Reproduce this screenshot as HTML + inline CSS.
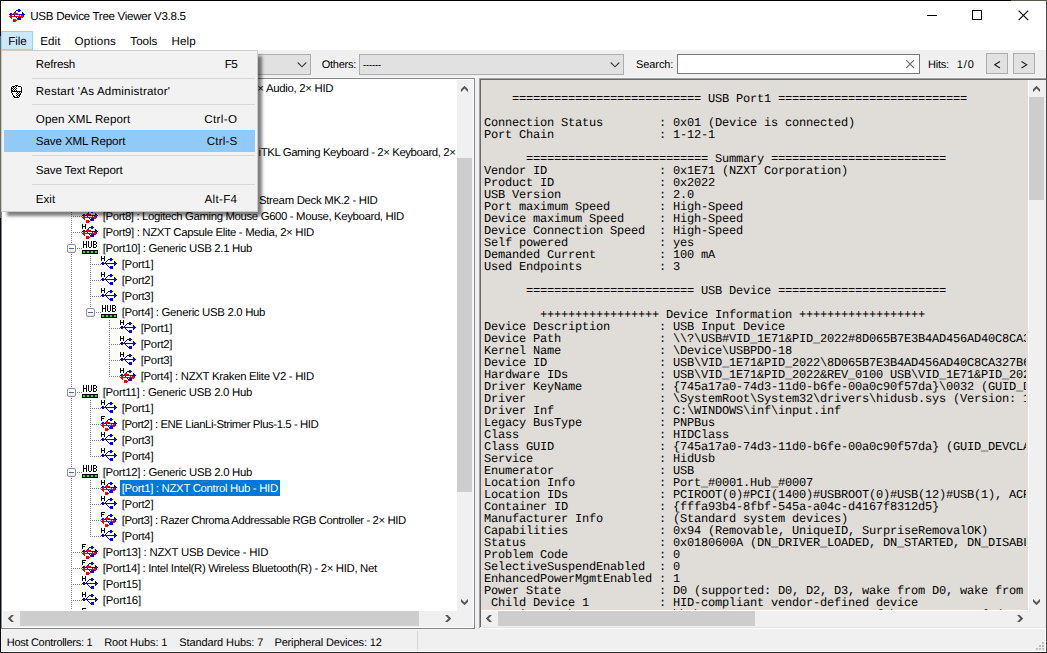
<!DOCTYPE html><html><head><meta charset="utf-8"><title>USB Device Tree Viewer</title><style>
html,body{margin:0;padding:0;background:#fff;}
body{width:1047px;height:653px;overflow:hidden;position:relative;font-family:"Liberation Sans", sans-serif;}
#win{position:absolute;left:0;top:0;width:1047px;height:653px;overflow:hidden}
.t{position:absolute;white-space:pre;font-family:"Liberation Sans", sans-serif;text-rendering:geometricPrecision}
.ic{position:absolute}
.combo{position:absolute;top:54px;height:21px;box-sizing:border-box;border:1px solid #adadad;background:#e1e1e1}
.vd{position:absolute;width:1px;background:linear-gradient(#808080 50%,transparent 50%) 0 0/1px 2px}
.hd{position:absolute;height:1px;background:linear-gradient(90deg,#808080 50%,transparent 50%) 0 0/2px 1px}
.pm{position:absolute;width:9px;height:9px;box-sizing:border-box;border:1px solid #919191;border-radius:2px;background:linear-gradient(#fff 40%,#e6e6e6)}
.pm i{position:absolute;left:1px;top:3px;width:5px;height:1px;background:#4b63a7}
#tree{position:absolute;left:0;top:0;width:1047px;height:653px;clip-path:inset(80px 590px 43px 2px)}
#rt{position:absolute;left:481px;top:80px;width:547px;height:530px;overflow:hidden;background:#e0ddd8}
#rtc{position:absolute;left:0;top:0;width:545px;height:530px;overflow:hidden}
#rt pre{margin:0;position:absolute;left:3px;top:1px;font-family:"Liberation Mono", monospace;font-size:12px;letter-spacing:-0.2012px;line-height:12px;color:#000;text-rendering:geometricPrecision}
#pop{position:absolute;left:1px;top:50px;width:257px;height:162px;box-sizing:border-box;border:1px solid #ccc;background:#f2f2f2;box-shadow:5px 5px 3px -1px rgba(0,0,0,.5);z-index:5}
</style></head><body><svg width="0" height="0" style="position:absolute"><defs><symbol id="iE" viewBox="0 0 16 16"><path d="M1 6h2v1h-2zM0 7h16v1h-16zM1 8h2v1h-2zM13 5h1v1h-1zM13 6h2v1h-2zM13 8h2v1h-2zM13 9h1v1h-1zM4 6h1v1h-1zM5 5h1v1h-1zM6 4h1v1h-1zM7 3h2v1h-2zM9 2h2v1h-2zM8 3h4v1h-4zM9 4h2v1h-2z" fill="#00f"/><path d="M5 8h1v1h-1zM6 9h1v1h-1zM7 10h1v1h-1zM8 11h1v1h-1zM9 10h3v1h-3zM9 11h3v1h-3zM9 12h3v1h-3z" fill="#00f"/></symbol><symbol id="iD" viewBox="0 0 16 16"><path d="M1 6h2v1h-2zM0 7h16v1h-16zM1 8h2v1h-2zM13 5h1v1h-1zM13 6h2v1h-2zM13 8h2v1h-2zM13 9h1v1h-1zM4 6h1v1h-1zM5 5h1v1h-1zM6 4h1v1h-1zM7 3h2v1h-2zM9 2h2v1h-2zM8 3h4v1h-4zM9 4h2v1h-2z" fill="#00f"/><path d="M0 9h15v1h-15zM2 7h1v1h-1zM1 8h2v1h-2zM1 10h2v1h-2zM2 11h1v1h-1zM12 8h2v1h-2zM12 10h2v1h-2zM5 5h2v1h-2zM4 6h5v1h-5zM5 7h2v1h-2zM9 7h1v1h-1zM10 8h1v1h-1zM10 10h1v1h-1zM9 11h1v1h-1zM8 12h1v1h-1zM4 12h3v1h-3zM4 13h4v1h-4zM4 14h3v1h-3z" fill="#f00"/><path d="M5 8h1v1h-1zM6 9h1v1h-1zM7 10h1v1h-1zM8 11h1v1h-1zM9 10h3v1h-3zM9 11h3v1h-3zM9 12h3v1h-3z" fill="#00f"/></symbol><symbol id="gH" viewBox="0 0 16 16"><path d="M0 0h1v1h-1zM3 0h1v1h-1zM0 1h1v1h-1zM3 1h1v1h-1zM0 2h4v1h-4zM0 3h1v1h-1zM3 3h1v1h-1zM0 4h1v1h-1zM3 4h1v1h-1z" fill="#000"/></symbol><symbol id="gF" viewBox="0 0 16 16"><path d="M0 0h4v1h-4zM0 1h1v1h-1zM0 2h3v1h-3zM0 3h1v1h-1zM0 4h1v1h-1z" fill="#000"/></symbol><symbol id="iHub" viewBox="0 0 16 16"><path d="M1 1h1v1h-1zM4 1h1v1h-1zM1 2h1v1h-1zM4 2h1v1h-1zM1 3h1v1h-1zM4 3h1v1h-1zM1 4h4v1h-4zM1 5h1v1h-1zM4 5h1v1h-1zM1 6h1v1h-1zM4 6h1v1h-1zM1 7h1v1h-1zM4 7h1v1h-1zM6 1h1v1h-1zM9 1h1v1h-1zM6 2h1v1h-1zM9 2h1v1h-1zM6 3h1v1h-1zM9 3h1v1h-1zM6 4h1v1h-1zM9 4h1v1h-1zM6 5h1v1h-1zM9 5h1v1h-1zM6 6h1v1h-1zM9 6h1v1h-1zM7 7h2v1h-2zM11 1h3v1h-3zM11 2h1v1h-1zM14 2h1v1h-1zM11 3h1v1h-1zM14 3h1v1h-1zM11 4h3v1h-3zM11 5h1v1h-1zM14 5h1v1h-1zM11 6h1v1h-1zM14 6h1v1h-1zM11 7h3v1h-3z" fill="#000"/><path d="M0 10h16v1h-16zM0 11h16v1h-16zM0 12h16v1h-16zM0 13h16v1h-16z" fill="#000"/><path d="M1 11h2v1h-2zM5 11h2v1h-2zM9 11h2v1h-2zM13 11h2v1h-2zM1 12h2v1h-2zM5 12h2v1h-2zM9 12h2v1h-2zM13 12h2v1h-2z" fill="#0f0"/></symbol></defs></svg><div id="win"><div style="position:absolute;left:0;top:0;width:1047px;height:50px;background:#fff"></div><svg class="ic" style="left:9px;top:7px" width="16" height="16" shape-rendering="crispEdges"><use href="#iD"/></svg><div class="t" style="left:30.268px;top:8px;height:17px;line-height:17px;font-size:11.6px;letter-spacing:-0.299px;color:#000;">USB Device Tree Viewer V3.8.5</div><svg style="position:absolute;left:920px;top:5px" width="115" height="22" shape-rendering="crispEdges"><path d="M7 10.5h10" stroke="#000" stroke-width="1" fill="none"/><rect x="52.5" y="5.5" width="9" height="9" stroke="#000" stroke-width="1" fill="none"/><path d="M98.6 5.6l9.6 9.6M108.2 5.6l-9.6 9.6" stroke="#000" stroke-width="1.1" fill="none" shape-rendering="geometricPrecision"/></svg><div style="position:absolute;left:1px;top:31px;width:32px;height:19px;background:#cce8ff;box-shadow:inset 0 0 0 1px #99d1ff"></div><div class="t" style="left:8.168000000000001px;top:32px;height:19px;line-height:19px;font-size:11.6px;letter-spacing:-0.065px;color:#000;">File</div><div class="t" style="left:40.168px;top:32px;height:19px;line-height:19px;font-size:11.6px;letter-spacing:0.111px;color:#000;">Edit</div><div class="t" style="left:74.468px;top:32px;height:19px;line-height:19px;font-size:11.6px;letter-spacing:0.251px;color:#000;">Options</div><div class="t" style="left:130.368px;top:32px;height:19px;line-height:19px;font-size:11.6px;letter-spacing:-0.030px;color:#000;">Tools</div><div class="t" style="left:171.468px;top:32px;height:19px;line-height:19px;font-size:11.6px;letter-spacing:0.167px;color:#000;">Help</div><div style="position:absolute;left:0;top:50px;width:1047px;height:603px;background:#f0f0f0"></div><div style="position:absolute;left:0;top:77px;width:1047px;height:1px;background:#f5f5f5"></div><div class="combo" style="left:200px;width:111px"></div><svg style="position:absolute;left:297px;top:61px" width="10" height="7"><path d="M0.7 1.5l4.3 4.3l4.3-4.3" stroke="#3c3c3c" stroke-width="1.15" fill="none"/></svg><div class="combo" style="left:359px;width:265px"></div><svg style="position:absolute;left:610px;top:61px" width="10" height="7"><path d="M0.7 1.5l4.3 4.3l4.3-4.3" stroke="#3c3c3c" stroke-width="1.15" fill="none"/></svg><div class="t" style="left:321.67999999999995px;top:57px;height:16px;line-height:16px;font-size:11px;letter-spacing:-0.228px;color:#000;">Others:</div><div style="position:absolute;left:363px;top:65px;width:18px;height:1px;background:repeating-linear-gradient(90deg,#a5651c 0 1px,#000 1px 2px,#1b62b0 2px 3px)"></div><div class="t" style="left:636.0799999999999px;top:57px;height:16px;line-height:16px;font-size:11px;letter-spacing:-0.106px;color:#000;">Search:</div><div style="position:absolute;left:677px;top:54px;width:243px;height:20px;box-sizing:border-box;border:1px solid #7a7a7a;background:#fff"></div><svg style="position:absolute;left:905px;top:59px" width="10" height="10"><path d="M1.2 1.2l7.8 7.8M9 1.2l-7.8 7.8" stroke="#6e6e6e" stroke-width="1.1" fill="none"/></svg><div class="t" style="left:928.0799999999999px;top:57px;height:16px;line-height:16px;font-size:11px;letter-spacing:-0.284px;color:#000;">Hits:</div><div class="t" style="left:956.78px;top:57px;height:16px;line-height:16px;font-size:11px;letter-spacing:0.861px;color:#000;">1/0</div><div style="position:absolute;left:986px;top:53px;width:22px;height:21px;box-sizing:border-box;border:1px solid #adadad;background:#e1e1e1"></div><svg style="position:absolute;left:994px;top:61px" width="7" height="8"><path d="M6 0.5L0.7 3.75L6 7" stroke="#1c1c1c" stroke-width="1.05" fill="none"/></svg><div style="position:absolute;left:1013px;top:53px;width:22px;height:21px;box-sizing:border-box;border:1px solid #adadad;background:#e1e1e1"></div><svg style="position:absolute;left:1021px;top:61px" width="7" height="8"><path d="M0.5 0.5L5.8 3.75L0.5 7" stroke="#1c1c1c" stroke-width="1.05" fill="none"/></svg><div style="position:absolute;left:1px;top:78px;width:474px;height:551px;box-sizing:border-box;border:1px solid #828790;background:#fff"></div><div id="tree"><div class="vd" style="left:71px;top:80px;height:561px"></div><div class="vd" style="left:90px;top:256px;height:57px"></div><div class="vd" style="left:109px;top:320px;height:57px"></div><div class="vd" style="left:90px;top:400px;height:57px"></div><div class="vd" style="left:90px;top:480px;height:57px"></div><div class="hd" style="left:71px;top:216px;width:11px"></div><svg class="ic" style="left:82px;top:208px" width="16" height="16" shape-rendering="crispEdges"><use href="#iD"/></svg><div class="t" style="left:102.67200000000001px;top:208.6px;height:16px;line-height:16px;font-size:11.4px;letter-spacing:-0.366px;color:#000;">[Port8] : Logitech Gaming Mouse G600 - Mouse, Keyboard, HID</div><div class="hd" style="left:71px;top:232px;width:11px"></div><svg class="ic" style="left:82px;top:224px" width="16" height="16" shape-rendering="crispEdges"><use href="#iD"/><use href="#gH"/></svg><div class="t" style="left:102.67200000000001px;top:224.6px;height:16px;line-height:16px;font-size:11.4px;letter-spacing:-0.339px;color:#000;">[Port9] : NZXT Capsule Elite - Media, 2× HID</div><div class="hd" style="left:77px;top:248px;width:5px"></div><svg class="ic" style="left:82px;top:240px" width="16" height="16" shape-rendering="crispEdges"><use href="#iHub"/></svg><div class="t" style="left:102.67200000000001px;top:240.6px;height:16px;line-height:16px;font-size:11.4px;letter-spacing:-0.320px;color:#000;">[Port10] : Generic USB 2.1 Hub</div><div class="hd" style="left:90px;top:264px;width:11px"></div><svg class="ic" style="left:101px;top:256px" width="16" height="16" shape-rendering="crispEdges"><use href="#iE"/><use href="#gH"/></svg><div class="t" style="left:121.67200000000001px;top:256.6px;height:16px;line-height:16px;font-size:11.4px;letter-spacing:-0.279px;color:#000;">[Port1]</div><div class="hd" style="left:90px;top:280px;width:11px"></div><svg class="ic" style="left:101px;top:272px" width="16" height="16" shape-rendering="crispEdges"><use href="#iE"/><use href="#gH"/></svg><div class="t" style="left:121.67200000000001px;top:272.6px;height:16px;line-height:16px;font-size:11.4px;letter-spacing:-0.279px;color:#000;">[Port2]</div><div class="hd" style="left:90px;top:296px;width:11px"></div><svg class="ic" style="left:101px;top:288px" width="16" height="16" shape-rendering="crispEdges"><use href="#iE"/><use href="#gH"/></svg><div class="t" style="left:121.67200000000001px;top:288.6px;height:16px;line-height:16px;font-size:11.4px;letter-spacing:-0.279px;color:#000;">[Port3]</div><div class="hd" style="left:96px;top:312px;width:5px"></div><svg class="ic" style="left:101px;top:304px" width="16" height="16" shape-rendering="crispEdges"><use href="#iHub"/></svg><div class="t" style="left:121.67200000000001px;top:304.6px;height:16px;line-height:16px;font-size:11.4px;letter-spacing:-0.316px;color:#000;">[Port4] : Generic USB 2.0 Hub</div><div class="hd" style="left:109px;top:328px;width:11px"></div><svg class="ic" style="left:120px;top:320px" width="16" height="16" shape-rendering="crispEdges"><use href="#iE"/><use href="#gH"/></svg><div class="t" style="left:140.672px;top:320.6px;height:16px;line-height:16px;font-size:11.4px;letter-spacing:-0.293px;color:#000;">[Port1]</div><div class="hd" style="left:109px;top:344px;width:11px"></div><svg class="ic" style="left:120px;top:336px" width="16" height="16" shape-rendering="crispEdges"><use href="#iE"/><use href="#gH"/></svg><div class="t" style="left:140.672px;top:336.6px;height:16px;line-height:16px;font-size:11.4px;letter-spacing:-0.293px;color:#000;">[Port2]</div><div class="hd" style="left:109px;top:360px;width:11px"></div><svg class="ic" style="left:120px;top:352px" width="16" height="16" shape-rendering="crispEdges"><use href="#iE"/><use href="#gH"/></svg><div class="t" style="left:140.672px;top:352.6px;height:16px;line-height:16px;font-size:11.4px;letter-spacing:-0.293px;color:#000;">[Port3]</div><div class="hd" style="left:109px;top:376px;width:11px"></div><svg class="ic" style="left:120px;top:368px" width="16" height="16" shape-rendering="crispEdges"><use href="#iD"/><use href="#gH"/></svg><div class="t" style="left:140.672px;top:368.6px;height:16px;line-height:16px;font-size:11.4px;letter-spacing:-0.300px;color:#000;">[Port4] : NZXT Kraken Elite V2 - HID</div><div class="hd" style="left:77px;top:392px;width:5px"></div><svg class="ic" style="left:82px;top:384px" width="16" height="16" shape-rendering="crispEdges"><use href="#iHub"/></svg><div class="t" style="left:102.67200000000001px;top:384.6px;height:16px;line-height:16px;font-size:11.4px;letter-spacing:-0.292px;color:#000;">[Port11] : Generic USB 2.0 Hub</div><div class="hd" style="left:90px;top:408px;width:11px"></div><svg class="ic" style="left:101px;top:400px" width="16" height="16" shape-rendering="crispEdges"><use href="#iE"/><use href="#gH"/></svg><div class="t" style="left:121.67200000000001px;top:400.6px;height:16px;line-height:16px;font-size:11.4px;letter-spacing:-0.279px;color:#000;">[Port1]</div><div class="hd" style="left:90px;top:424px;width:11px"></div><svg class="ic" style="left:101px;top:416px" width="16" height="16" shape-rendering="crispEdges"><use href="#iD"/><use href="#gF"/></svg><div class="t" style="left:121.67200000000001px;top:416.6px;height:16px;line-height:16px;font-size:11.4px;letter-spacing:-0.431px;color:#000;">[Port2] : ENE LianLi-Strimer Plus-1.5 - HID</div><div class="hd" style="left:90px;top:440px;width:11px"></div><svg class="ic" style="left:101px;top:432px" width="16" height="16" shape-rendering="crispEdges"><use href="#iE"/><use href="#gH"/></svg><div class="t" style="left:121.67200000000001px;top:432.6px;height:16px;line-height:16px;font-size:11.4px;letter-spacing:-0.279px;color:#000;">[Port3]</div><div class="hd" style="left:90px;top:456px;width:11px"></div><svg class="ic" style="left:101px;top:448px" width="16" height="16" shape-rendering="crispEdges"><use href="#iE"/><use href="#gH"/></svg><div class="t" style="left:121.67200000000001px;top:448.6px;height:16px;line-height:16px;font-size:11.4px;letter-spacing:-0.279px;color:#000;">[Port4]</div><div class="hd" style="left:77px;top:472px;width:5px"></div><svg class="ic" style="left:82px;top:464px" width="16" height="16" shape-rendering="crispEdges"><use href="#iHub"/></svg><div class="t" style="left:102.67200000000001px;top:464.6px;height:16px;line-height:16px;font-size:11.4px;letter-spacing:-0.320px;color:#000;">[Port12] : Generic USB 2.0 Hub</div><div class="hd" style="left:90px;top:488px;width:11px"></div><svg class="ic" style="left:101px;top:480px" width="16" height="16" shape-rendering="crispEdges"><use href="#iD"/><use href="#gH"/></svg><div style="position:absolute;left:120px;top:480px;width:160px;height:16px;background:#0078d7"></div><div class="t" style="left:121.67200000000001px;top:480.6px;height:16px;line-height:16px;font-size:11.4px;letter-spacing:-0.317px;color:#fff;">[Port1] : NZXT Control Hub - HID</div><div class="hd" style="left:90px;top:504px;width:11px"></div><svg class="ic" style="left:101px;top:496px" width="16" height="16" shape-rendering="crispEdges"><use href="#iE"/><use href="#gH"/></svg><div class="t" style="left:121.67200000000001px;top:496.6px;height:16px;line-height:16px;font-size:11.4px;letter-spacing:-0.279px;color:#000;">[Port2]</div><div class="hd" style="left:90px;top:520px;width:11px"></div><svg class="ic" style="left:101px;top:512px" width="16" height="16" shape-rendering="crispEdges"><use href="#iD"/><use href="#gF"/></svg><div class="t" style="left:121.67200000000001px;top:512.6px;height:16px;line-height:16px;font-size:11.4px;letter-spacing:-0.435px;color:#000;">[Port3] : Razer Chroma Addressable RGB Controller - 2× HID</div><div class="hd" style="left:90px;top:536px;width:11px"></div><svg class="ic" style="left:101px;top:528px" width="16" height="16" shape-rendering="crispEdges"><use href="#iE"/><use href="#gH"/></svg><div class="t" style="left:121.67200000000001px;top:528.6px;height:16px;line-height:16px;font-size:11.4px;letter-spacing:-0.279px;color:#000;">[Port4]</div><div class="hd" style="left:71px;top:552px;width:11px"></div><svg class="ic" style="left:82px;top:544px" width="16" height="16" shape-rendering="crispEdges"><use href="#iD"/><use href="#gF"/></svg><div class="t" style="left:102.67200000000001px;top:544.6px;height:16px;line-height:16px;font-size:11.4px;letter-spacing:-0.241px;color:#000;">[Port13] : NZXT USB Device - HID</div><div class="hd" style="left:71px;top:568px;width:11px"></div><svg class="ic" style="left:82px;top:560px" width="16" height="16" shape-rendering="crispEdges"><use href="#iD"/><use href="#gF"/></svg><div class="t" style="left:102.67200000000001px;top:560.6px;height:16px;line-height:16px;font-size:11.4px;letter-spacing:-0.348px;color:#000;">[Port14] : Intel Intel(R) Wireless Bluetooth(R) - 2× HID, Net</div><div class="hd" style="left:71px;top:584px;width:11px"></div><svg class="ic" style="left:82px;top:576px" width="16" height="16" shape-rendering="crispEdges"><use href="#iE"/><use href="#gH"/></svg><div class="t" style="left:102.67200000000001px;top:576.6px;height:16px;line-height:16px;font-size:11.4px;letter-spacing:-0.210px;color:#000;">[Port15]</div><div class="hd" style="left:71px;top:600px;width:11px"></div><svg class="ic" style="left:82px;top:592px" width="16" height="16" shape-rendering="crispEdges"><use href="#iE"/><use href="#gH"/></svg><div class="t" style="left:102.67200000000001px;top:592.6px;height:16px;line-height:16px;font-size:11.4px;letter-spacing:-0.210px;color:#000;">[Port16]</div><div class="hd" style="left:71px;top:616px;width:11px"></div><svg class="ic" style="left:82px;top:608px" width="16" height="16" shape-rendering="crispEdges"><use href="#iD"/><use href="#gF"/></svg><div class="t" style="left:102.67200000000001px;top:608.6px;height:16px;line-height:16px;font-size:11.4px;letter-spacing:0.812px;color:#000;">[Port17] : Device</div><div class="pm" style="left:67px;top:244px"><i></i></div><div class="pm" style="left:86px;top:308px"><i></i></div><div class="pm" style="left:67px;top:388px"><i></i></div><div class="pm" style="left:67px;top:468px"><i></i></div><div class="t" style="left:257.372px;top:80.6px;height:16px;line-height:16px;font-size:11.4px;letter-spacing:-0.301px;color:#000;">× Audio, 2× HID</div><div class="t" style="left:258.572px;top:144.6px;height:16px;line-height:16px;font-size:11.4px;letter-spacing:-0.408px;color:#000;">iTKL Gaming Keyboard - 2× Keyboard, 2×</div><div class="t" style="left:258.972px;top:192.6px;height:16px;line-height:16px;font-size:11.4px;letter-spacing:-0.310px;color:#000;">Stream Deck MK.2 - HID</div></div><div style="position:absolute;left:457px;top:80px;width:16px;height:531px;background:#f0f0f0"></div><div style="position:absolute;left:457px;top:158px;width:15px;height:334px;background:#cdcdcd"></div><svg style="position:absolute;left:461px;top:86px" width="7" height="6"><polygon points="0,3.3 3.5,-0.2 7,3.3 7,6.1 3.5,2.6 0,6.1" fill="#565656"/></svg><svg style="position:absolute;left:461px;top:599px" width="7" height="6"><polygon points="0,2.7 3.5,6.2 7,2.7 7,-0.09999999999999964 3.5,3.4 0,-0.09999999999999964" fill="#565656"/></svg><div style="position:absolute;left:3px;top:611px;width:470px;height:16px;background:#f0f0f0"></div><div style="position:absolute;left:20px;top:611px;width:399px;height:15px;background:#cdcdcd"></div><svg style="position:absolute;left:8px;top:615px" width="6" height="7"><polygon points="3.3,0 -0.2,3.5 3.3,7 6.1,7 2.6,3.5 6.1,0" fill="#565656"/></svg><svg style="position:absolute;left:445px;top:615px" width="6" height="7"><polygon points="2.7,0 6.2,3.5 2.7,7 -0.09999999999999964,7 3.4,3.5 -0.09999999999999964,0" fill="#565656"/></svg><div style="position:absolute;left:479px;top:78px;width:567px;height:551px;background:#f0f0f0"></div><div style="position:absolute;left:479px;top:78px;width:567px;height:1px;background:#a0a0a0"></div><div style="position:absolute;left:479px;top:78px;width:1px;height:550px;background:#a0a0a0"></div><div style="position:absolute;left:480px;top:79px;width:566px;height:1px;background:#696969"></div><div style="position:absolute;left:480px;top:79px;width:1px;height:548px;background:#696969"></div><div style="position:absolute;left:480px;top:627px;width:566px;height:1px;background:#e3e3e3"></div><div style="position:absolute;left:479px;top:628px;width:567px;height:1px;background:#fff"></div><div style="position:absolute;left:481px;top:80px;width:548px;height:531px;background:#fff"></div><div id="rt"><div id="rtc"><pre>

    =========================== USB Port1 ===========================

Connection Status        : 0x01 (Device is connected)
Port Chain               : 1-12-1

      ========================== Summary =========================
Vendor ID                : 0x1E71 (NZXT Corporation)
Product ID               : 0x2022
USB Version              : 2.0
Port maximum Speed       : High-Speed
Device maximum Speed     : High-Speed
Device Connection Speed  : High-Speed
Self powered             : yes
Demanded Current         : 100 mA
Used Endpoints           : 3

      ======================== USB Device ========================

        +++++++++++++++++ Device Information ++++++++++++++++++
Device Description       : USB Input Device
Device Path              : \\?\USB#VID_1E71&amp;PID_2022#8D065B7E3B4AD456AD40C8CA327B6FD0#{a5dcbf10-6530-11d2-901f-00c04fb951ed} (GUID_DEVINTERFACE_USB_DEVICE)
Kernel Name              : \Device\USBPDO-18
Device ID                : USB\VID_1E71&amp;PID_2022\8D065B7E3B4AD456AD40C8CA327B6FD0
Hardware IDs             : USB\VID_1E71&amp;PID_2022&amp;REV_0100 USB\VID_1E71&amp;PID_2022
Driver KeyName           : {745a17a0-74d3-11d0-b6fe-00a0c90f57da}\0032 (GUID_DEVCLASS_HIDCLASS)
Driver                   : \SystemRoot\System32\drivers\hidusb.sys (Version: 10.0.26100.1150  Date: 2024-07-18)
Driver Inf               : C:\WINDOWS\inf\input.inf
Legacy BusType           : PNPBus
Class                    : HIDClass
Class GUID               : {745a17a0-74d3-11d0-b6fe-00a0c90f57da} (GUID_DEVCLASS_HIDCLASS)
Service                  : HidUsb
Enumerator               : USB
Location Info            : Port_#0001.Hub_#0007
Location IDs             : PCIROOT(0)#PCI(1400)#USBROOT(0)#USB(12)#USB(1), ACPI(_SB_)#ACPI(PC00)#ACPI(XHCI)#ACPI(RHUB)#ACPI(HS12)#USB(1)
Container ID             : {fffa93b4-8fbf-545a-a04c-d4167f8312d5}
Manufacturer Info        : (Standard system devices)
Capabilities             : 0x94 (Removable, UniqueID, SurpriseRemovalOK)
Status                   : 0x0180600A (DN_DRIVER_LOADED, DN_STARTED, DN_DISABLEABLE, DN_REMOVABLE, DN_NT_ENUMERATOR, DN_NT_DRIVER)
Problem Code             : 0
SelectiveSuspendEnabled  : 0
EnhancedPowerMgmtEnabled : 1
Power State              : D0 (supported: D0, D2, D3, wake from D0, wake from D2)
 Child Device 1          : HID-compliant vendor-defined device
  Device Path            : \\?\HID#VID_1E71&amp;PID_2022#9&amp;2f4b1c6a&amp;0&amp;0000#{4d1e55b2-f16f-11cf-88cb-001111000030}</pre></div></div><div style="position:absolute;left:1029px;top:97px;width:15px;height:103px;background:#cdcdcd"></div><svg style="position:absolute;left:1033px;top:86px" width="7" height="6"><polygon points="0,3.3 3.5,-0.2 7,3.3 7,6.1 3.5,2.6 0,6.1" fill="#565656"/></svg><svg style="position:absolute;left:1033px;top:599px" width="7" height="6"><polygon points="0,2.7 3.5,6.2 7,2.7 7,-0.09999999999999964 3.5,3.4 0,-0.09999999999999964" fill="#565656"/></svg><div style="position:absolute;left:498px;top:611px;width:257px;height:15px;background:#cdcdcd"></div><svg style="position:absolute;left:486px;top:615px" width="6" height="7"><polygon points="3.3,0 -0.2,3.5 3.3,7 6.1,7 2.6,3.5 6.1,0" fill="#565656"/></svg><svg style="position:absolute;left:1017px;top:615px" width="6" height="7"><polygon points="2.7,0 6.2,3.5 2.7,7 -0.09999999999999964,7 3.4,3.5 -0.09999999999999964,0" fill="#565656"/></svg><div style="position:absolute;left:0;top:629px;width:1047px;height:24px;background:#f0f0f0"></div><div style="position:absolute;left:417px;top:631px;width:1px;height:20px;background:#d7d7d7"></div><div class="t" style="left:6.78px;top:635px;height:16px;line-height:16px;font-size:11px;letter-spacing:-0.295px;color:#000;">Host Controllers: 1</div><div class="t" style="left:104.18px;top:635px;height:16px;line-height:16px;font-size:11px;letter-spacing:-0.085px;color:#000;">Root Hubs: 1</div><div class="t" style="left:179.28px;top:635px;height:16px;line-height:16px;font-size:11px;letter-spacing:-0.103px;color:#000;">Standard Hubs: 7</div><div class="t" style="left:274.47999999999996px;top:635px;height:16px;line-height:16px;font-size:11px;letter-spacing:-0.159px;color:#000;">Peripheral Devices: 12</div><svg style="position:absolute;left:1036px;top:642px" width="8" height="8" shape-rendering="crispEdges" fill="#bfbfbf"><rect x="6" y="0" width="2" height="2"/><rect x="3" y="3" width="2" height="2"/><rect x="6" y="3" width="2" height="2"/><rect x="0" y="6" width="2" height="2"/><rect x="3" y="6" width="2" height="2"/><rect x="6" y="6" width="2" height="2"/></svg><div id="pop"><div style="position:absolute;left:2px;top:79px;width:251px;height:22px;background:#91c9f7"></div><div style="position:absolute;left:30px;top:27px;width:223px;height:1px;background:#d7d7d7"></div><div style="position:absolute;left:30px;top:53px;width:223px;height:1px;background:#d7d7d7"></div><div style="position:absolute;left:30px;top:104px;width:223px;height:1px;background:#d7d7d7"></div><div style="position:absolute;left:30px;top:133px;width:223px;height:1px;background:#d7d7d7"></div></div><div class="t" style="left:35.768px;top:54.5px;height:19px;line-height:19px;font-size:11.6px;letter-spacing:-0.183px;color:#000;z-index:6;">Refresh</div><div class="t" style="left:224.668px;top:54.5px;height:19px;line-height:19px;font-size:11.6px;letter-spacing:-0.402px;color:#000;z-index:6;">F5</div><div class="t" style="left:35.768px;top:82px;height:19px;line-height:19px;font-size:11.6px;letter-spacing:0.189px;color:#000;z-index:6;">Restart 'As Administrator'</div><div class="t" style="left:35.768px;top:109.5px;height:19px;line-height:19px;font-size:11.6px;letter-spacing:0.101px;color:#000;z-index:6;">Open XML Report</div><div class="t" style="left:204.168px;top:109.5px;height:19px;line-height:19px;font-size:11.6px;letter-spacing:0.384px;color:#000;z-index:6;">Ctrl-O</div><div class="t" style="left:35.768px;top:132px;height:19px;line-height:19px;font-size:11.6px;letter-spacing:-0.103px;color:#000;z-index:6;">Save XML Report</div><div class="t" style="left:206.768px;top:132px;height:19px;line-height:19px;font-size:11.6px;letter-spacing:0.167px;color:#000;z-index:6;">Ctrl-S</div><div class="t" style="left:35.768px;top:161px;height:19px;line-height:19px;font-size:11.6px;letter-spacing:-0.118px;color:#000;z-index:6;">Save Text Report</div><div class="t" style="left:35.768px;top:190px;height:19px;line-height:19px;font-size:11.6px;letter-spacing:0.025px;color:#000;z-index:6;">Exit</div><div class="t" style="left:204.468px;top:190px;height:19px;line-height:19px;font-size:11.6px;letter-spacing:0.334px;color:#000;z-index:6;">Alt-F4</div><svg style="position:absolute;left:10px;top:84px;z-index:6" width="13" height="15" shape-rendering="crispEdges"><path d="M6 0h1v1h-1zM9 1h1v1h-1zM6 14h1v1h-1zM4 14h1v1h-1zM12 3h1v1h-1zM12 6h1v1h-1zM9 13h1v1h-1zM11 10h1v1h-1zM10 12h1v1h-1zM1 9h1v1h-1zM2 1h1v1h-1zM0 5h1v1h-1zM0 8h1v1h-1zM8 14h1v1h-1zM4 1h1v1h-1zM12 5h1v1h-1zM1 2h1v1h-1zM10 11h1v1h-1zM12 8h1v1h-1zM11 9h1v1h-1zM2 12h1v1h-1zM8 1h1v1h-1zM7 0h1v1h-1zM7 14h1v1h-1zM0 4h1v1h-1zM5 0h1v1h-1zM0 7h1v1h-1zM10 1h1v1h-1zM5 14h1v1h-1zM12 4h1v1h-1zM11 2h1v1h-1zM1 10h1v1h-1zM3 1h1v1h-1zM12 7h1v1h-1zM3 13h1v1h-1zM2 11h1v1h-1zM0 3h1v1h-1zM0 6h1v1h-1z" fill="#fbfbfb"/><path d="M5 2h1v1h-1zM7 2h1v1h-1zM2 3h1v1h-1zM4 3h1v1h-1zM6 3h1v1h-1zM7 3h1v1h-1zM8 3h1v1h-1zM9 3h1v1h-1zM10 3h1v1h-1zM3 4h1v1h-1zM5 4h1v1h-1zM7 4h1v1h-1zM8 4h1v1h-1zM9 4h1v1h-1zM10 4h1v1h-1zM2 5h1v1h-1zM4 5h1v1h-1zM6 5h1v1h-1zM7 5h1v1h-1zM8 5h1v1h-1zM9 5h1v1h-1zM10 5h1v1h-1zM3 6h1v1h-1zM5 6h1v1h-1zM7 6h1v1h-1zM8 6h1v1h-1zM9 6h1v1h-1zM10 6h1v1h-1zM2 8h1v1h-1zM3 8h1v1h-1zM4 8h1v1h-1zM5 8h1v1h-1zM6 8h1v1h-1zM8 8h1v1h-1zM10 8h1v1h-1zM3 9h1v1h-1zM4 9h1v1h-1zM5 9h1v1h-1zM7 9h1v1h-1zM9 9h1v1h-1zM3 10h1v1h-1zM4 10h1v1h-1zM5 10h1v1h-1zM6 10h1v1h-1zM8 10h1v1h-1zM4 11h1v1h-1zM5 11h1v1h-1zM7 11h1v1h-1zM5 12h1v1h-1zM6 12h1v1h-1zM8 12h1v1h-1z" fill="#fff"/><path d="M5 1h1v1h-1zM6 1h1v1h-1zM7 1h1v1h-1zM2 2h1v1h-1zM3 2h1v1h-1zM4 2h1v1h-1zM6 2h1v1h-1zM8 2h1v1h-1zM9 2h1v1h-1zM10 2h1v1h-1zM1 3h1v1h-1zM3 3h1v1h-1zM5 3h1v1h-1zM11 3h1v1h-1zM1 4h1v1h-1zM2 4h1v1h-1zM4 4h1v1h-1zM6 4h1v1h-1zM11 4h1v1h-1zM1 5h1v1h-1zM3 5h1v1h-1zM5 5h1v1h-1zM11 5h1v1h-1zM1 6h1v1h-1zM2 6h1v1h-1zM4 6h1v1h-1zM6 6h1v1h-1zM11 6h1v1h-1zM1 7h1v1h-1zM2 7h1v1h-1zM3 7h1v1h-1zM4 7h1v1h-1zM5 7h1v1h-1zM6 7h1v1h-1zM7 7h1v1h-1zM8 7h1v1h-1zM9 7h1v1h-1zM10 7h1v1h-1zM11 7h1v1h-1zM1 8h1v1h-1zM7 8h1v1h-1zM9 8h1v1h-1zM11 8h1v1h-1zM2 9h1v1h-1zM6 9h1v1h-1zM8 9h1v1h-1zM10 9h1v1h-1zM2 10h1v1h-1zM7 10h1v1h-1zM9 10h1v1h-1zM10 10h1v1h-1zM3 11h1v1h-1zM6 11h1v1h-1zM8 11h1v1h-1zM9 11h1v1h-1zM3 12h1v1h-1zM4 12h1v1h-1zM7 12h1v1h-1zM9 12h1v1h-1zM4 13h1v1h-1zM5 13h1v1h-1zM6 13h1v1h-1zM7 13h1v1h-1zM8 13h1v1h-1z" fill="#000"/></svg><div style="position:absolute;left:0;top:0;width:1047px;height:1px;background:#000;z-index:9"></div><div style="position:absolute;left:1011px;top:0;width:36px;height:1px;background:#55554a;z-index:9"></div><div style="position:absolute;left:0;top:0;width:1px;height:653px;background:#0a0a0a;z-index:9"></div><div style="position:absolute;left:0;top:36px;width:1px;height:182px;background:#6a6a60;z-index:9"></div><div style="position:absolute;left:1046px;top:1px;width:1px;height:652px;background:#4a4a4a;z-index:9"></div><div style="position:absolute;left:1045px;top:629px;width:1px;height:23px;background:#fff"></div><div style="position:absolute;left:1px;top:651px;width:1045px;height:1px;background:#fff"></div><div style="position:absolute;left:0;top:652px;width:1047px;height:1px;background:#222;z-index:9"></div></div></body></html>
